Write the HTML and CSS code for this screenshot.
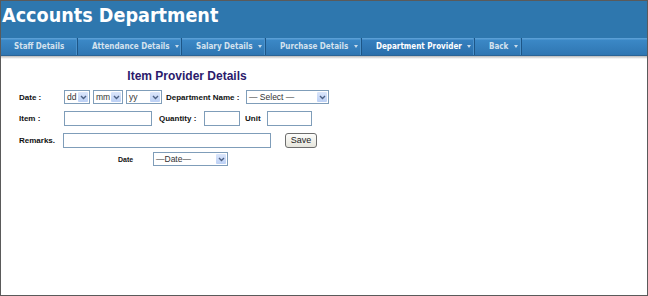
FILE: index.html
```html
<!DOCTYPE html>
<html lang="en">
<head>
<meta charset="UTF-8">
<title>Accounts Department</title>
<link rel="stylesheet" href="styles.css">
</head>
<body>
<div class="frame">
  <div class="header">Accounts Department</div>
  <div class="nav">
    <div class="nav-item w-staff">Staff Details</div>
    <div class="nav-item w-att">Attendance Details <span class="caret"></span></div>
    <div class="nav-item w-sal">Salary Details <span class="caret"></span></div>
    <div class="nav-item w-pur">Purchase Details <span class="caret"></span></div>
    <div class="nav-item w-dep active">Department Provider <span class="caret"></span></div>
    <div class="nav-item w-back">Back <span class="caret"></span></div>
  </div>
  <div class="shadow"></div>

  <div class="form">
    <div class="form-title">Item Provider Details</div>

    <div class="row r1">
      <div class="lbl l-date">Date :</div>
      <div class="sel s-dd"><span class="sel-text">dd</span><span class="sel-btn"><svg width="7" height="5" viewBox="0 0 7 5"><path d="M1 1 L3.5 3.5 L6 1" fill="none" stroke="#4d6185" stroke-width="1.4"/></svg></span></div>
      <div class="sel s-mm"><span class="sel-text">mm</span><span class="sel-btn"><svg width="7" height="5" viewBox="0 0 7 5"><path d="M1 1 L3.5 3.5 L6 1" fill="none" stroke="#4d6185" stroke-width="1.4"/></svg></span></div>
      <div class="sel s-yy"><span class="sel-text">yy</span><span class="sel-btn"><svg width="7" height="5" viewBox="0 0 7 5"><path d="M1 1 L3.5 3.5 L6 1" fill="none" stroke="#4d6185" stroke-width="1.4"/></svg></span></div>
      <div class="lbl l-dept">Department Name :</div>
      <div class="sel s-dept"><span class="sel-text">&mdash; Select &mdash;</span><span class="sel-btn"><svg width="7" height="5" viewBox="0 0 7 5"><path d="M1 1 L3.5 3.5 L6 1" fill="none" stroke="#4d6185" stroke-width="1.4"/></svg></span></div>
    </div>

    <div class="row r2">
      <div class="lbl l-date">Item :</div>
      <div class="inp i-item"></div>
      <div class="lbl l-qty">Quantity :</div>
      <div class="inp i-qty"></div>
      <div class="lbl l-unit">Unit</div>
      <div class="inp i-unit"></div>
    </div>

    <div class="row r3">
      <div class="lbl l-rem">Remarks.</div>
      <div class="inp i-rem"></div>
      <div class="btn">Save</div>
    </div>

    <div class="row r4">
      <div class="lbl l-small">Date</div>
      <div class="sel s-date"><span class="sel-text">&mdash;Date&mdash;</span><span class="sel-btn"><svg width="7" height="5" viewBox="0 0 7 5"><path d="M1 1 L3.5 3.5 L6 1" fill="none" stroke="#4d6185" stroke-width="1.4"/></svg></span></div>
    </div>
  </div>
</div>
</body>
</html>
```

FILE: styles.css
```css
* { margin: 0; padding: 0; box-sizing: border-box; }
body { background: #fff; }
.frame {
  width: 648px; height: 296px;
  border: 1px solid #5a5a5a;
  overflow: hidden;
  font-family: 'Liberation Sans', Arial, sans-serif;
}

.header {
  height: 37px;
  background: #2e77ae;
  color: #fff;
  font-family: 'DejaVu Sans Condensed', 'DejaVu Sans', Verdana, sans-serif;
  font-weight: bold; font-size: 19.6px;
  padding-left: 1px; line-height: 30px;
}

.nav {
  height: 18px;
  display: flex;
  background: linear-gradient(#5a9fd6 0, #5a9fd6 1px, #3b88c6 2px, #2f76b2 100%);
  border-bottom: 1px solid #2a6496;
}
.nav-item {
  height: 100%;
  border-right: 1px solid #1d5687;
  box-shadow: inset -1px 0 0 #4a92cc;
  color: #d4e2ee;
  font-family: 'DejaVu Sans Condensed', 'DejaVu Sans', sans-serif;
  font-weight: bold; font-size: 8px;
  line-height: 18px;
  padding-left: 14px;
  white-space: nowrap;
}
.nav-item.active { color: #fff; background: linear-gradient(#5a9fd6 0, #5a9fd6 1px, #357fbe 2px, #2a6fab 100%); }
.caret {
  display: inline-block; width: 0; height: 0;
  border-left: 2.5px solid transparent; border-right: 2.5px solid transparent;
  border-top: 3px solid #c9dbea;
  margin-left: 3px; vertical-align: 1px;
}
.w-staff { width: 77px; padding-left: 13px; }
.w-att { width: 104px; }
.w-sal { width: 84px; }
.w-pur { width: 96px; }
.w-dep { width: 113px; }
.w-back { width: 47px; }

.shadow { height: 3px; background: linear-gradient(#b9b9b9, #fff); }

.form { width: 372px; }
.form-title {
  text-align: center;
  color: #2b1a6b;
  font-weight: bold; font-size: 12px;
  line-height: 14px;
  margin-top: 10px;
}

.row { display: flex; align-items: center; height: 16px; }
.r1 { margin-top: 6px; }
.r2 { margin-top: 5px; }
.r3 { margin-top: 6px; }
.r4 { margin-top: 3px; }

.lbl { font-weight: bold; font-size: 8px; color: #111; white-space: nowrap; }
.l-date { margin-left: 18px; width: 45px; }
.l-dept { width: 80px; margin-left: 4px; }
.l-qty { width: 45px; margin-left: 7px; }
.l-unit { width: 22px; margin-left: 5px; }
.l-rem { margin-left: 18px; width: 44px; }
.l-small { margin-left: 117px; width: 35px; font-size: 7px; }

.sel {
  height: 14px;
  border: 1px solid #7f9db9;
  background: #fff;
  display: flex; align-items: stretch;
  font-size: 8.5px; color: #333;
}
.sel-text { flex: 1; padding-left: 2px; line-height: 12px; white-space: nowrap; overflow: hidden; }
.sel-btn {
  width: 10px; margin: 1px;
  background: linear-gradient(#dbe6fb, #bcd0f5);
  border-radius: 1px;
  display: flex; align-items: center; justify-content: center;
}
.s-dd { width: 26px; }
.s-mm { width: 30px; margin-left: 3px; }
.s-yy { width: 36px; margin-left: 3px; }
.s-dept { width: 83px; }
.s-date { width: 75px; }

.inp { height: 15px; border: 1px solid #7f9db9; background: #fff; }
.i-item { width: 88px; }
.i-qty { width: 36px; }
.i-unit { width: 45px; }
.i-rem { width: 208px; }

.btn {
  width: 32px; height: 15px; margin-left: 14px;
  border: 1px solid #6d6d6d; border-radius: 3px;
  background: linear-gradient(#fdfdfb, #e6e5dc);
  font-size: 9px; color: #222;
  text-align: center; line-height: 13px;
}
```
